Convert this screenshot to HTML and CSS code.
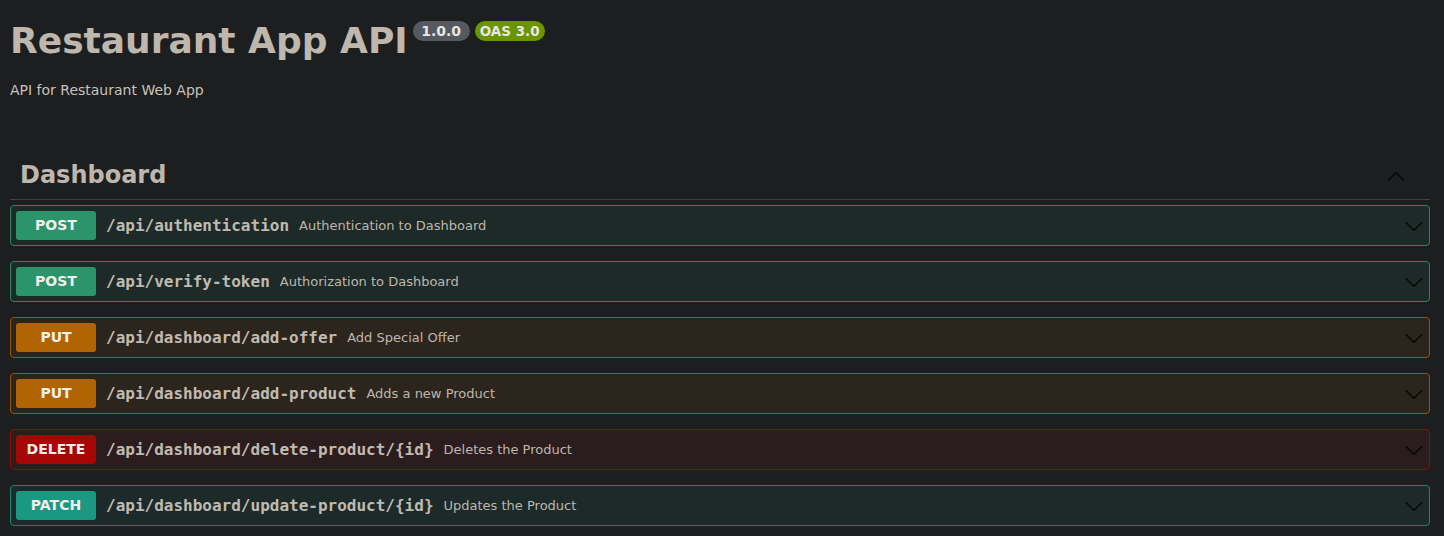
FILE: index.html
```html
<!DOCTYPE html>
<html>
<head>
<meta charset="utf-8">
<link rel="stylesheet" href="styles.css">
</head>
<body>
<div class="wrapper">
  <div class="info">
    <div class="title-row">
      <h2 class="title">Restaurant App API</h2>
      <span class="stamp stamp-version">1.0.0</span>
      <span class="stamp stamp-oas">OAS 3.0</span>
    </div>
    <p class="desc">API for Restaurant Web App</p>
  </div>

  <div class="tag">
    <h3 class="tag-title">
      <span>Dashboard</span>
      <svg class="arrow-up" width="20" height="20" viewBox="0 0 20 20"><path d="M17.418 14.908c.272.268.709.268.979 0s.271-.701 0-.969l-7.908-7.83c-.27-.268-.707-.268-.979 0l-7.908 7.83c-.27.268-.27.701 0 .969.271.268.709.268.979 0L10 7.767l7.418 7.141z"/></svg>
    </h3>

    <div class="op op-post">
      <span class="method">POST</span>
      <span class="path">/api/authentication</span>
      <span class="summary">Authentication to Dashboard</span>
      <svg class="arrow" width="20" height="20" viewBox="0 0 20 20"><path d="M17.418 6.109c.272-.268.709-.268.979 0s.271.701 0 .969l-7.908 7.83c-.27.268-.707.268-.979 0l-7.908-7.83c-.27-.268-.27-.701 0-.969.271-.268.709-.268.979 0L10 13.25l7.418-7.141z"/></svg>
    </div>
    <div class="op op-post">
      <span class="method">POST</span>
      <span class="path">/api/verify-token</span>
      <span class="summary">Authorization to Dashboard</span>
      <svg class="arrow" width="20" height="20" viewBox="0 0 20 20"><path d="M17.418 6.109c.272-.268.709-.268.979 0s.271.701 0 .969l-7.908 7.83c-.27.268-.707.268-.979 0l-7.908-7.83c-.27-.268-.27-.701 0-.969.271-.268.709-.268.979 0L10 13.25l7.418-7.141z"/></svg>
    </div>
    <div class="op op-put">
      <span class="method">PUT</span>
      <span class="path">/api/dashboard/add-offer</span>
      <span class="summary">Add Special Offer</span>
      <svg class="arrow" width="20" height="20" viewBox="0 0 20 20"><path d="M17.418 6.109c.272-.268.709-.268.979 0s.271.701 0 .969l-7.908 7.83c-.27.268-.707.268-.979 0l-7.908-7.83c-.27-.268-.27-.701 0-.969.271-.268.709-.268.979 0L10 13.25l7.418-7.141z"/></svg>
    </div>
    <div class="op op-put">
      <span class="method">PUT</span>
      <span class="path">/api/dashboard/add-product</span>
      <span class="summary">Adds a new Product</span>
      <svg class="arrow" width="20" height="20" viewBox="0 0 20 20"><path d="M17.418 6.109c.272-.268.709-.268.979 0s.271.701 0 .969l-7.908 7.83c-.27.268-.707.268-.979 0l-7.908-7.83c-.27-.268-.27-.701 0-.969.271-.268.709-.268.979 0L10 13.25l7.418-7.141z"/></svg>
    </div>
    <div class="op op-delete">
      <span class="method">DELETE</span>
      <span class="path">/api/dashboard/delete-product/{id}</span>
      <span class="summary">Deletes the Product</span>
      <svg class="arrow" width="20" height="20" viewBox="0 0 20 20"><path d="M17.418 6.109c.272-.268.709-.268.979 0s.271.701 0 .969l-7.908 7.83c-.27.268-.707.268-.979 0l-7.908-7.83c-.27-.268-.27-.701 0-.969.271-.268.709-.268.979 0L10 13.25l7.418-7.141z"/></svg>
    </div>
    <div class="op op-patch">
      <span class="method">PATCH</span>
      <span class="path">/api/dashboard/update-product/{id}</span>
      <span class="summary">Updates the Product</span>
      <svg class="arrow" width="20" height="20" viewBox="0 0 20 20"><path d="M17.418 6.109c.272-.268.709-.268.979 0s.271.701 0 .969l-7.908 7.83c-.27.268-.707.268-.979 0l-7.908-7.83c-.27-.268-.27-.701 0-.969.271-.268.709-.268.979 0L10 13.25l7.418-7.141z"/></svg>
    </div>
  </div>
</div>
</body>
</html>
```

FILE: styles.css
```css
html, body {
  margin: 0;
  padding: 0;
  background: #1c1e20;
}
body {
  font-family: "DejaVu Sans", sans-serif;
  color: #bdb7ae;
  overflow: hidden;
}
.wrapper {
  padding: 0 14px 0 10px;
}
.info {
  padding-top: 19px;
}
.title-row {
  display: flex;
  align-items: flex-start;
}
.title {
  margin: 0;
  font-size: 36px;
  font-weight: bold;
  line-height: 44px;
  color: #bdb7ae;
}
.stamp {
  display: inline-block;
  margin-top: 2px;
  height: 20px;
  line-height: 20px;
  border-radius: 10px;
  font-size: 14px;
  font-weight: bold;
  color: #e8e6e3;
  text-align: center;
}
.stamp-version {
  margin-left: 5px;
  width: 57px;
  background: #545a5f;
}
.stamp-oas {
  margin-left: 5px;
  width: 70px;
  font-size: 13.5px;
  background: #6a9400;
}
.desc {
  margin: 18px 0 0;
  font-size: 14px;
  line-height: 18px;
  color: #c8c3bb;
}
.tag {
  margin-top: 53px;
}
.tag-title {
  display: flex;
  align-items: center;
  justify-content: space-between;
  margin: 0 0 5px;
  padding: 10px 24px 10px 10px;
  height: 27px;
  border-bottom: 1px solid #3b3e42;
  font-size: 24px;
  font-weight: bold;
  color: #bdb7ae;
}
.tag-title span {
  margin-top: -2px;
}
.arrow-up {
  fill: #080808;
}
.op {
  display: flex;
  align-items: center;
  height: 29px;
  padding: 5px;
  margin-bottom: 15px;
  border: 1px solid;
  border-radius: 4px;
}
.method {
  flex: none;
  min-width: 80px;
  height: 29px;
  line-height: 29px;
  text-align: center;
  border-radius: 3px;
  font-size: 14px;
  font-weight: bold;
  color: #f2efea;
}
.path {
  margin-left: 10px;
  font-family: "DejaVu Sans Mono", monospace;
  font-size: 16px;
  font-weight: bold;
  color: #c0bab1;
}
.summary {
  margin-left: 10px;
  font-size: 13px;
  color: #bdb7ae;
  flex: 1;
}
.arrow {
  flex: none;
  fill: #080808;
}
.op-post { background: #1e2a27; border-color: #2b8762; }
.op-post .method { background: #2c946b; }
.op-put { background: #2c251d; border-color: #935507; }
.op-put .method { background: #b06403; }
.op-delete { background: #2b1d1e; border-color: #8c0b0b; }
.op-delete .method { background: #a60606; }
.op-patch { background: #1c2a29; border-color: #1a856f; }
.op-patch .method { background: #1a9882; }
```
